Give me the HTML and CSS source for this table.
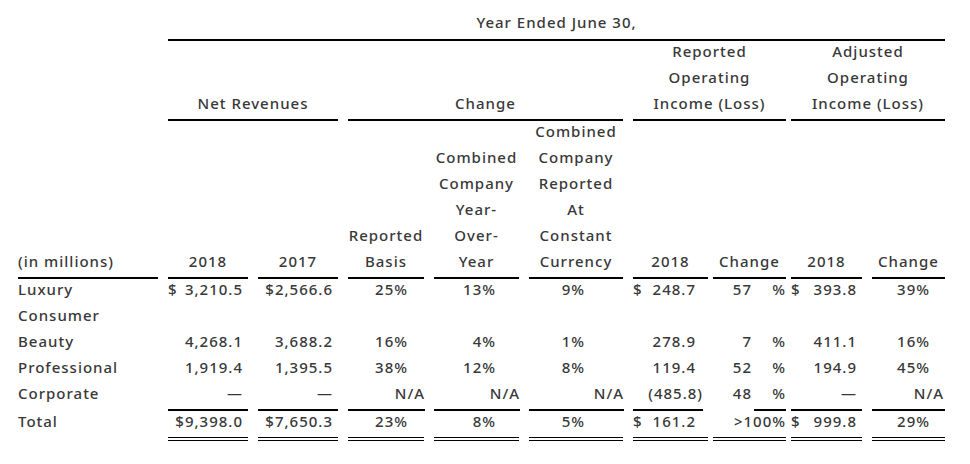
FILE: index.html
```html
<!DOCTYPE html>
<html lang="en">
<head>
<meta charset="utf-8">
<title>Net Revenues by Segment</title>
<link rel="stylesheet" href="styles.css">
</head>
<body>
<div class="page">
  <div class="fin">
    <!-- Row A -->
    <div class="c0"></div>
    <div class="title span-all rule">Year Ended June 30,</div>

    <!-- Row B -->
    <div class="c0"></div>
    <div class="grp g-net rule">Net Revenues</div>
    <div class="grp g-chg rule">Change</div>
    <div class="grp g-rep rule">Reported<br>Operating<br>Income (Loss)</div>
    <div class="grp g-adj rule shift">Adjusted<br>Operating<br>Income (Loss)</div>

    <!-- Row C -->
    <div class="hd left rule">(in millions)</div>
    <div class="hd rule">2018</div>
    <div class="hd rule">2017</div>
    <div class="hd rule">Reported<br>Basis</div>
    <div class="hd rule">Combined<br>Company<br>Year-<br>Over-<br>Year</div>
    <div class="hd rule">Combined<br>Company<br>Reported<br>At<br>Constant<br>Currency</div>
    <div class="hd rule">2018</div>
    <div class="hd rule shift">Change</div>
    <div class="hd rule shift">2018</div>
    <div class="hd rule">Change</div>

    <!-- Luxury -->
    <div class="lbl">Luxury</div>
    <div class="num split pr6"><span>$</span><span>3,210.5</span></div>
    <div class="num pr6">$2,566.6</div>
    <div class="num pr17">25%</div>
    <div class="num pr24">13%</div>
    <div class="num pr39">9%</div>
    <div class="num split pr13"><span>$</span><span>248.7</span></div>
    <div class="num pct shift"><span>57</span><span class="pc">%</span></div>
    <div class="num split pr6 shift"><span>$</span><span>393.8</span></div>
    <div class="num pr16">39%</div>

    <!-- Consumer -->
    <div class="lbl">Consumer</div>
    <div></div><div></div><div></div><div></div><div></div><div></div><div class="shift"></div><div class="shift"></div><div></div>

    <!-- Beauty -->
    <div class="lbl">Beauty</div>
    <div class="num pr6">4,268.1</div>
    <div class="num pr6">3,688.2</div>
    <div class="num pr17">16%</div>
    <div class="num pr24">4%</div>
    <div class="num pr39">1%</div>
    <div class="num pr13">278.9</div>
    <div class="num pct shift"><span>7</span><span class="pc">%</span></div>
    <div class="num pr6 shift">411.1</div>
    <div class="num pr16">16%</div>

    <!-- Professional -->
    <div class="lbl">Professional</div>
    <div class="num pr6">1,919.4</div>
    <div class="num pr6">1,395.5</div>
    <div class="num pr17">38%</div>
    <div class="num pr24">12%</div>
    <div class="num pr39">8%</div>
    <div class="num pr13">119.4</div>
    <div class="num pct shift"><span>52</span><span class="pc">%</span></div>
    <div class="num pr6 shift">194.9</div>
    <div class="num pr16">45%</div>

    <!-- Corporate -->
    <div class="lbl sub-none">Corporate</div>
    <div class="num pr6 sub">—</div>
    <div class="num pr6 sub">—</div>
    <div class="num pr1 sub">N/A</div>
    <div class="num pr1 sub">N/A</div>
    <div class="num pr1 sub">N/A</div>
    <div class="num pr6 sub-part part-left">(485.8)</div>
    <div class="num pct shift sub-part part-right"><span>48</span><span class="pc">%</span></div>
    <div class="num pr6 shift sub">—</div>
    <div class="num pr2 sub">N/A</div>

    <!-- Total -->
    <div class="lbl">Total</div>
    <div class="num pr6 dbl">$9,398.0</div>
    <div class="num pr6 dbl">$7,650.3</div>
    <div class="num pr17 dbl">23%</div>
    <div class="num pr24 dbl">8%</div>
    <div class="num pr39 dbl">5%</div>
    <div class="num split pr13 dbl"><span>$</span><span>161.2</span></div>
    <div class="num shift dbl">&gt;100%</div>
    <div class="num split pr6 shift dbl"><span>$</span><span>999.8</span></div>
    <div class="num pr16 dbl">29%</div>
  </div>
</div>
</body>
</html>
```

FILE: styles.css
```css
html, body {
  margin: 0;
  padding: 0;
  background: #ffffff;
}

.page {
  padding: 12px 0 0 18px;
  font-family: "Noto Sans", "DejaVu Sans", sans-serif;
  font-size: 15px;
  font-weight: 500;
  letter-spacing: 1px;
  color: #383838;
  line-height: 26px;
}

.fin {
  display: grid;
  grid-template-columns: 140px 80px 80px 76px 85px 94px 75px 68px 66px 73px;
  column-gap: 10px;
  width: 927px;
}

/* lift the glyphs 3px inside each line box while keeping the rules in place */
.fin > div {
  white-space: nowrap;
  margin-top: -3px;
  padding-bottom: 3px;
}

.fin > div.shift {
  margin-left: -5px;
}

.rule {
  border-bottom: 2px solid #000;
}

.fin > .title {
  grid-column: 2 / 11;
  text-align: center;
  padding-bottom: 4px;
}

.grp {
  align-self: end;
  text-align: center;
}

.g-net { grid-column: 2 / 4; }
.g-chg { grid-column: 4 / 7; }
.g-rep { grid-column: 7 / 9; }
.g-adj { grid-column: 9 / 11; }

.hd {
  align-self: end;
  text-align: center;
}

.hd.left,
.lbl {
  text-align: left;
}

.num {
  text-align: right;
}

.split {
  display: flex;
  justify-content: space-between;
}

.pct {
  display: flex;
  justify-content: flex-end;
}

.pct .pc {
  width: 34px;
  text-align: right;
}

.pr1 { padding-right: 0; margin-right: -1px; }
.pr2 { padding-right: 1px; }
.pr6 { padding-right: 5px; }
.pr13 { padding-right: 12px; }
.pr16 { padding-right: 15px; }
.pr17 { padding-right: 16px; }
.pr24 { padding-right: 23px; }
.pr39 { padding-right: 38px; }

.sub {
  border-bottom: 2px solid #000;
}

.sub-none {
  border-bottom: 2px solid transparent;
}

.sub-part {
  border-bottom: 2px solid transparent;
  background-origin: border-box;
  background-repeat: no-repeat;
  background-image: linear-gradient(#000, #000);
}

.part-left {
  background-size: 70px 2px;
  background-position: left bottom;
}

.part-right {
  background-size: 32px 2px;
  background-position: right bottom;
}

.dbl {
  border-bottom: 4px double #000;
}
```
